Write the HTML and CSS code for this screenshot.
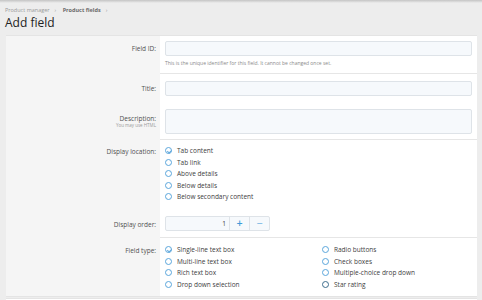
FILE: index.html
```html
<!DOCTYPE html>
<html lang="en">
<head>
  <meta charset="UTF-8">
  <title>Add field</title>
  <link rel="stylesheet" href="styles.css">
</head>
<body>
  <div class="topbar"></div>

  <div class="crumbs">
    <a href="#">Product manager</a><span class="sep">›</span>
    <a href="#" class="strong">Product fields</a><span class="sep">›</span>
  </div>
  <h1>Add field</h1>

  <form class="block">
    <!-- Field ID -->
    <div class="row row-id sep">
      <div class="label">Field ID:</div>
      <div class="ctrl">
        <input class="input" type="text">
        <div class="hint">This is the unique identifier for this field. It cannot be changed once set.</div>
      </div>
    </div>

    <!-- Title -->
    <div class="row row-title">
      <div class="label">Title:</div>
      <div class="ctrl">
        <input class="input" type="text">
      </div>
    </div>

    <!-- Description -->
    <div class="row row-desc sep">
      <div class="label">Description:<span class="sub">You may use HTML</span></div>
      <div class="ctrl">
        <textarea class="input area"></textarea>
      </div>
    </div>

    <!-- Display location -->
    <div class="row row-loc">
      <div class="label">Display location:</div>
      <div class="ctrl">
        <ul class="radios">
          <li><span class="radio checked"></span>Tab content</li>
          <li><span class="radio"></span>Tab link</li>
          <li><span class="radio"></span>Above details</li>
          <li><span class="radio"></span>Below details</li>
          <li><span class="radio"></span>Below secondary content</li>
        </ul>
      </div>
    </div>

    <!-- Display order -->
    <div class="row row-order sep">
      <div class="label">Display order:</div>
      <div class="ctrl">
        <div class="spinner">
          <input class="spin-val" type="text" value="1">
          <button type="button" class="spin-btn">+</button>
          <button type="button" class="spin-btn minus">−</button>
        </div>
      </div>
    </div>

    <!-- Field type -->
    <div class="row row-type">
      <div class="label">Field type:</div>
      <div class="ctrl">
        <ul class="radios cols">
          <li><span class="radio checked"></span>Single-line text box</li>
          <li><span class="radio"></span>Radio buttons</li>
          <li><span class="radio"></span>Multi-line text box</li>
          <li><span class="radio"></span>Check boxes</li>
          <li><span class="radio"></span>Rich text box</li>
          <li><span class="radio"></span>Multiple-choice drop down</li>
          <li><span class="radio"></span>Drop down selection</li>
          <li><span class="radio dark"></span>Star rating</li>
        </ul>
      </div>
    </div>
  </form>
  <div class="next"></div>
</body>
</html>
```

FILE: styles.css
```css
* {
  box-sizing: border-box;
  margin: 0;
  padding: 0;
}

body {
  font-family: "Open Sans", "Noto Sans", sans-serif;
  font-size: 6.5px;
  color: #4a4a4a;
  background-color: #ededed;
  overflow: hidden;
}

.topbar {
  height: 3px;
  background: linear-gradient(#c4c4c4, #ededed);
}

.crumbs {
  padding: 3px 5px 0;
  height: 12px;
  line-height: 9px;
  font-size: 5.5px;
  color: #9a9a9a;
}

.crumbs a {
  color: #9a9a9a;
  text-decoration: none;
}

.crumbs a.strong {
  color: #6b6b6b;
  font-weight: bold;
}

.crumbs .sep {
  margin: 0 5px;
}

h1 {
  font-size: 12px;
  line-height: 16px;
  height: 20px;
  font-weight: normal;
  color: #222;
  margin: 0 5px;
}

.block {
  margin: 0 5px 0 6px;
  background-color: #f5f5f5;
  border-top: 1px solid #e4e4e4;
  border-bottom: 1px solid #e4e4e4;
}

.row {
  display: flex;
}

.label {
  width: 154px;
  flex-shrink: 0;
  text-align: right;
  line-height: 9px;
  padding-right: 4px;
  color: #505050;
}

.ctrl {
  flex: 1;
  background-color: #fff;
  padding: 0 5px;
}

.row.sep .ctrl {
  border-bottom: 1px solid #e6e6e6;
}

.row-id .label { padding-top: 8px; }
.row-id .ctrl { height: 38px; padding-top: 5px; }

.row-title .label { padding-top: 10px; }
.row-title .ctrl { height: 28px; padding-top: 7px; }

.row-desc .label { padding-top: 12.5px; line-height: 7px; }
.row-desc .ctrl { height: 38px; padding-top: 7px; }

.row-loc .label { padding-top: 7px; }
.row-loc .ctrl { height: 68px; padding-top: 5px; }

.row-order .label { padding-top: 12px; }
.row-order .ctrl { height: 30px; padding-top: 8px; }

.row-type .label { padding-top: 8px; }
.row-type .ctrl { height: 58px; padding-top: 6px; }

.sub {
  display: block;
  font-size: 4.5px;
  color: #9a9a9a;
  line-height: 7px;
}

.input {
  display: block;
  width: 100%;
  height: 15px;
  background-color: #f6f9fc;
  border: 1px solid #dee3e8;
  border-radius: 2px;
  font: inherit;
}

.area {
  height: 25px;
  resize: none;
}

.hint {
  font-size: 5px;
  line-height: 8px;
  color: #8a8a8a;
  margin-top: 3px;
}

.radios {
  list-style: none;
}

.radios li {
  display: flex;
  align-items: center;
  height: 11.5px;
  color: #404040;
}

.radios.cols {
  display: grid;
  grid-template-columns: 157px 1fr;
}

.radio {
  width: 7px;
  height: 7px;
  border: 1px solid #5ba6dc;
  border-radius: 50%;
  margin-right: 5px;
  position: relative;
}

.radio.dark {
  border-color: #3d6d8d;
}

.radio.checked::after {
  content: "";
  position: absolute;
  left: 1.6px;
  top: 0.6px;
  width: 1.6px;
  height: 3px;
  border: solid #5ba6dc;
  border-width: 0 1px 1px 0;
  transform: rotate(45deg);
}

.spinner {
  display: flex;
  width: 105px;
  height: 15px;
  border: 1px solid #dee3e8;
  border-radius: 2px;
  background-color: #f6f9fc;
}

.spin-val {
  flex: 1;
  min-width: 0;
  border: none;
  background: transparent;
  text-align: right;
  padding-right: 3px;
  font: inherit;
  color: #404040;
}

.spin-btn {
  width: 20px;
  border: none;
  border-left: 1px solid #dee3e8;
  background: transparent;
  color: #3f9ad8;
  font-family: "DejaVu Sans", sans-serif;
  font-size: 8px;
  font-weight: bold;
  line-height: 1;
}

.spin-btn.minus {
  color: #8cc0e6;
}

.next {
  margin: 1px 5px 0 6px;
  height: 10px;
  background-color: #fff;
  border-top: 1px solid #e4e4e4;
}
```
